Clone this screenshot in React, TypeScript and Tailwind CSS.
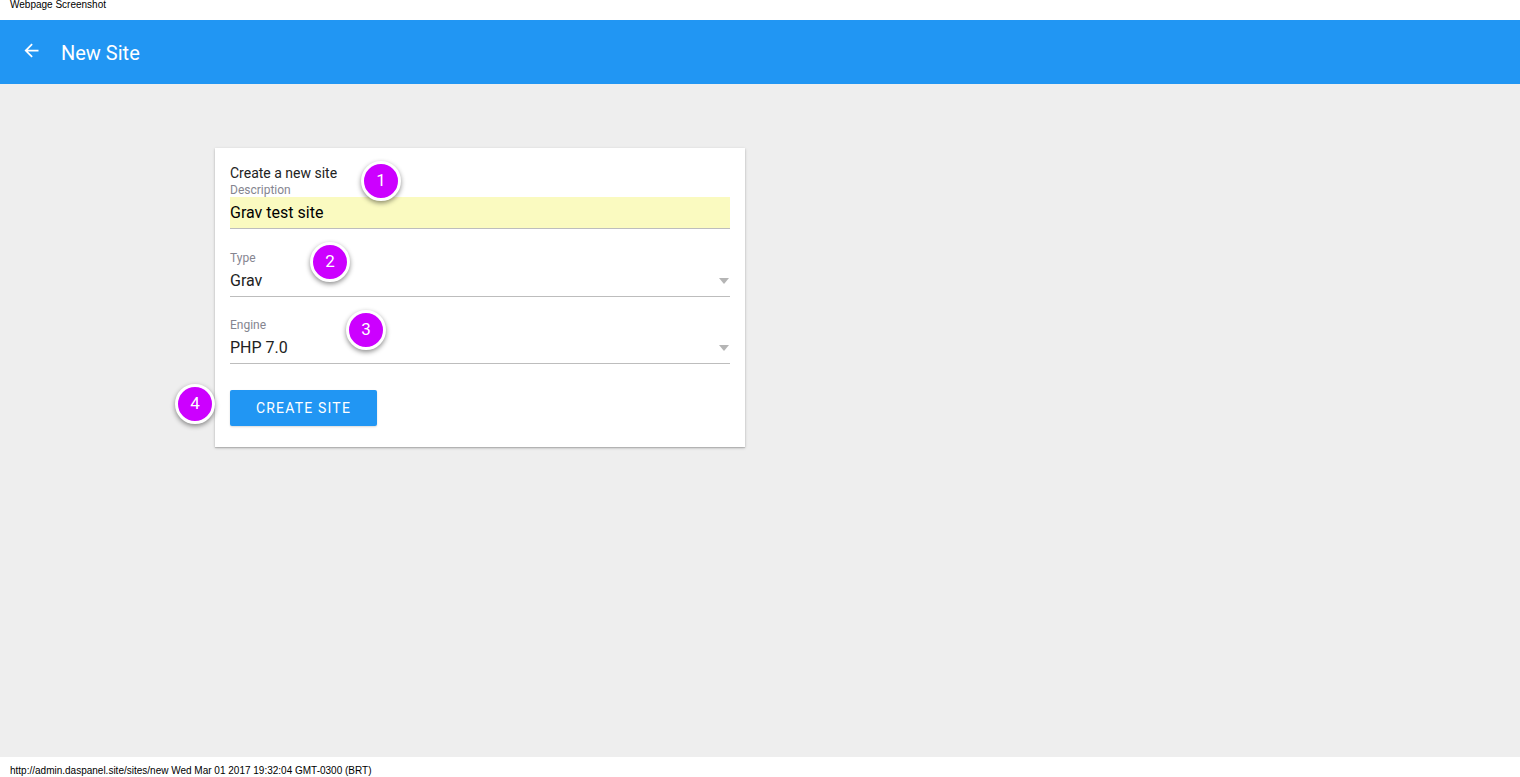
import React from 'react';

function Badge({ n, className }: { n: number; className: string }) {
  return (
    <div
      className={`absolute w-[40px] h-[40px] rounded-full bg-[#cc00ff] border-[3px] border-white shadow-[0_2px_5px_rgba(0,0,0,0.45)] flex items-center justify-center text-white text-[17px] ${className}`}
    >
      {n}
    </div>
  );
}

function SelectField({ label, value }: { label: string; value: string }) {
  return (
    <div className="flex flex-col">
      <span className="text-[12px] leading-[14px] text-[#858590]">{label}</span>
      <div className="flex items-center justify-between h-[32px] border-b border-[#bdbdbd]">
        <span className="text-[16px] text-[#222]">{value}</span>
        <svg width="10" height="6" viewBox="0 0 10 6" className="mr-[1px]">
          <path d="M0 0 L10 0 L5 6 Z" fill="#b5b5b5" />
        </svg>
      </div>
    </div>
  );
}

export default function App() {
  return (
    <div className="w-[1520px] h-[777px] flex flex-col bg-[#eeeeee] font-['Roboto',sans-serif]">
      {/* top caption strip */}
      <div className="h-[20px] bg-white px-[10px] text-[10px] leading-[10px] text-black font-['Liberation_Sans',sans-serif]">
        Webpage Screenshot
      </div>

      {/* App bar */}
      <header className="h-[64px] bg-[#2196f3] flex items-center pl-[21px] text-white">
        <svg width="21" height="21" viewBox="0 0 24 24" className="mb-[4px]">
          <path d="M20 11H7.83l5.59-5.59L12 4l-8 8 8 8 1.41-1.41L7.83 13H20v-2z" fill="white" />
        </svg>
        <span className="ml-[19px] mt-[2px] text-[20px]">New Site</span>
      </header>

      {/* Content */}
      <main className="flex-1 pt-[64px] pl-[215px]">
        <div className="relative w-[530px] bg-white shadow-[0_1px_3px_rgba(0,0,0,0.2),0_1px_1px_rgba(0,0,0,0.14)] px-[15px] pt-[17px] pb-[21px]">
          <div className="text-[14px] leading-[16px] text-[#222]">Create a new site</div>
          <div className="text-[12px] leading-[14px] text-[#858590] mt-[2px]">Description</div>
          <div className="h-[32px] bg-[#fafac0] border-b border-[#bdbdbd] flex items-center">
            <span className="text-[16px] text-black">Grav test site</span>
          </div>

          <div className="mt-[22px]">
            <SelectField label="Type" value="Grav" />
          </div>
          <div className="mt-[21px]">
            <SelectField label="Engine" value="PHP 7.0" />
          </div>

          <button className="mt-[26px] w-[147px] h-[36px] bg-[#2196f3] rounded-[2px] text-white text-[14px] tracking-[1.2px] shadow-[0_1px_2px_rgba(0,0,0,0.15)]">
            CREATE SITE
          </button>

          <Badge n={1} className="left-[146px] top-[13px]" />
          <Badge n={2} className="left-[95px] top-[94px]" />
          <Badge n={3} className="left-[131px] top-[162px]" />
          <Badge n={4} className="left-[-40px] top-[236px]" />
        </div>
      </main>

      {/* bottom caption strip */}
      <div className="h-[20px] bg-white px-[10px] pt-[9px] text-[10px] leading-[10px] text-black font-['Liberation_Sans',sans-serif]">
        http://admin.daspanel.site/sites/new Wed Mar 01 2017 19:32:04 GMT-0300 (BRT)
      </div>
    </div>
  );
}
